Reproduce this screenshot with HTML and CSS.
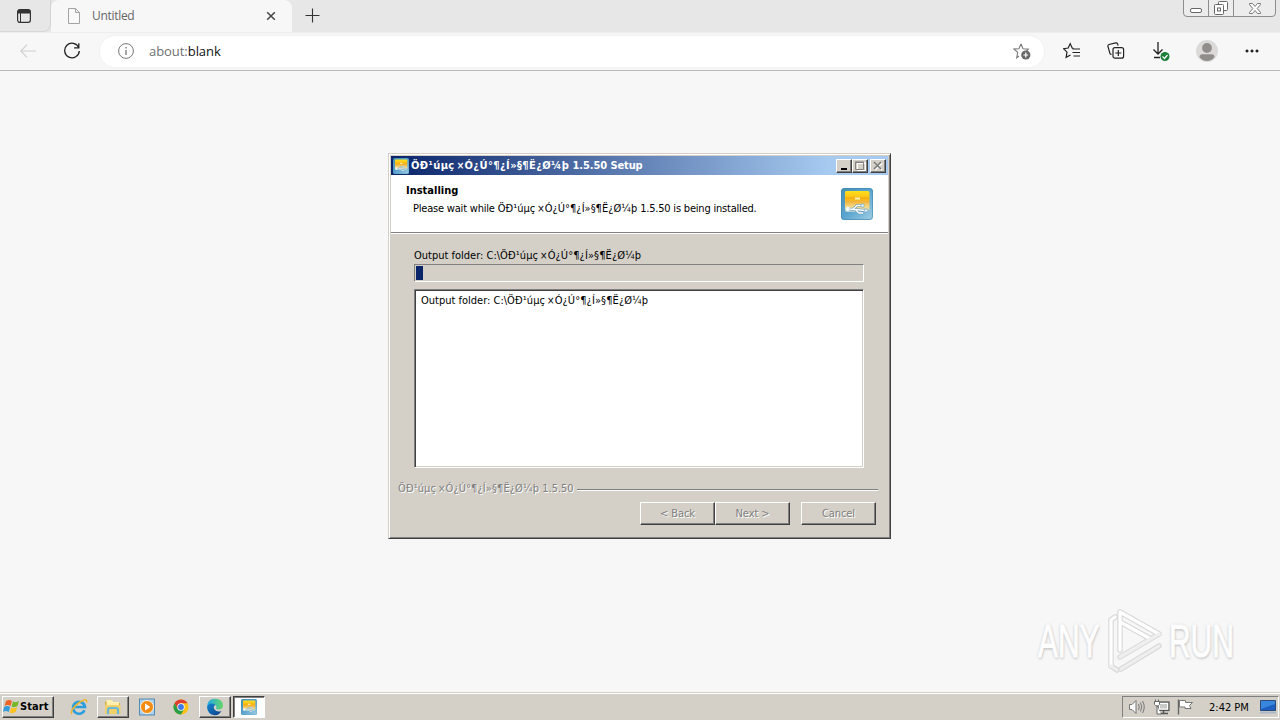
FILE: index.html
```html
<!DOCTYPE html>
<html lang="en">
<head>
<meta charset="utf-8">
<title>Untitled</title>
<link rel="stylesheet" href="styles.css">
</head>
<body>
<svg class="defs" aria-hidden="true">
  <defs>
    <linearGradient id="appBlue" x1="0" y1="0" x2="1" y2="1"><stop offset="0" stop-color="#4590b4"/><stop offset=".5" stop-color="#5ba4d0"/><stop offset="1" stop-color="#a0cfe4"/></linearGradient>
    <linearGradient id="appGold" x1="0" y1="0" x2="0" y2="1"><stop offset="0" stop-color="#ffe01c"/><stop offset=".4" stop-color="#fdb913"/><stop offset=".5" stop-color="#f0b43c"/><stop offset=".75" stop-color="#f5d984"/><stop offset="1" stop-color="#a8cfe0"/></linearGradient>
    <linearGradient id="edgeBlue" x1="0" y1="0" x2="1" y2="1"><stop offset="0" stop-color="#1685d2"/><stop offset="1" stop-color="#0c3f83"/></linearGradient>
    <linearGradient id="edgeGreen" x1="0" y1="0" x2="1" y2="0"><stop offset="0" stop-color="#24a9e6"/><stop offset="1" stop-color="#65d669"/></linearGradient>
    <symbol id="app" viewBox="0 0 32 32">
      <rect width="32" height="32" rx="3.5" fill="url(#appBlue)"/>
      <rect x=".5" y=".5" width="31" height="31" rx="3" fill="none" stroke="#3f86a8" stroke-opacity=".6"/>
      <path d="M5 3h22q1.500 0 1.500 1.500V22q0 2-2 2H6q-2 0-2-2V4.500Q4 3 5 3z" fill="url(#appGold)"/>
      <path d="M4 10h24" stroke="#e8a415"/><path d="M14 10.500h5" stroke="#fff3b8" stroke-width="2"/>
      <circle cx="7" cy="21" r="2.300" fill="#eef8ff"/>
      <path d="M8 21l17 1.500M12 21l4-3.500h4M14 21.500l4 3.500h4" fill="none" stroke="#5a93b4" stroke-width="2.400"/>
      <path d="M8 21l17 1.500M12 21l4-3.500h4M14 21.500l4 3.500h4" fill="none" stroke="#fff" stroke-width="1.300"/>
      <path d="M24 20.500l4 2.500-5 1.500zM20 16h3v3h-3z" fill="#e6f5ff" stroke="#5a93b4" stroke-width=".5"/>
    </symbol>
  </defs>
</svg>

<div class="screen">
  <header class="tabstrip">
    <div class="tab-actions">
      <svg width="16" height="16" viewBox="0 0 16 16"><rect x="1.600" y="1.600" width="12.800" height="12.800" rx="2.300" fill="none" stroke="#333" stroke-width="1.200"/><path d="M1.500 5.500V4q0-2.500 2.500-2.500h8q2.500 0 2.500 2.500v1.500z" fill="#333"/><path d="M4.500 5v9.500" stroke="#333"/></svg>
    </div>
    <div class="tab">
      <svg width="14" height="16" viewBox="0 0 14 16"><path d="M1.500.500h7l4 4v11h-11zM8.500.500v4h4" fill="#f9f9f9" stroke="#a3a3a3"/></svg>
      <span class="tab-title">Untitled</span>
      <svg class="tab-close" width="10" height="10" viewBox="0 0 10 10"><path d="M1.200 1.200l7.600 7.600M8.800 1.200L1.200 8.800" stroke="#444" stroke-width="1.500"/></svg>
    </div>
    <svg class="new-tab" width="15" height="15" viewBox="0 0 15 15"><path d="M7.500.500v14M.500 7.500h14" stroke="#333" stroke-width="1.100"/></svg>
    <div class="caption-buttons">
      <span class="cap"><svg width="12" height="5" viewBox="0 0 12 5"><rect x=".500" y=".500" width="11" height="4" rx="1.500" fill="#fff" stroke="#666"/></svg></span>
      <span class="cap"><svg width="14" height="14" viewBox="0 0 14 14"><path d="M4.500 4V1.500q0-1 1-1h7q1 0 1 1v7q0 1-1 1H10" fill="#fff" stroke="#666"/><rect x=".500" y="3.500" width="9" height="10" rx="1" fill="#fff" stroke="#666"/><rect x="3.500" y="7" width="3" height="3" fill="none" stroke="#666"/></svg></span>
      <span class="cap wide"><svg width="12" height="11" viewBox="0 0 12 11"><path d="M.500.500h3L6 3.500 8.500.500h3v1L8.200 5.500l3.300 4v1h-3L6 7.500 3.500 10.500h-3v-1l3.300-4-3.300-4z" fill="#fff" stroke="#6b6b6b" stroke-width=".9"/></svg></span>
    </div>
  </header>

  <nav class="toolbar">
    <svg class="back" width="16" height="14" viewBox="0 0 16 14"><path d="M7 .700L.800 7 7 13.300M1 7h15" fill="none" stroke="#cfcfcf" stroke-width="1.100"/></svg>
    <svg class="reload" width="18" height="18" viewBox="0 0 18 18"><path d="M15.700 5.600A7.300 7.300 0 1 0 16.300 9" fill="none" stroke="#222" stroke-width="1.300"/><path d="M15.800 1.200v4.700h-4.700" fill="none" stroke="#222" stroke-width="1.300"/></svg>
    <div class="address">
      <svg width="16" height="16" viewBox="0 0 16 16"><circle cx="8" cy="8" r="7.400" fill="none" stroke="#777"/><path d="M8 7v5M8 4v1.500" stroke="#777" stroke-width="1.300"/></svg>
      <span class="url"><span class="scheme">about:</span>blank</span>
      <svg class="fav" width="18" height="17" viewBox="0 0 18 17"><path d="M8 1l2 4.700 5.400.400-2 2.300M6 13l-2.300 1.700 1-5.400L.900 6.100l5-.400L8 1" fill="none" stroke="#777" stroke-width="1.100"/><circle cx="12.800" cy="12" r="4.600" fill="#666"/><path d="M12.800 9.600v4.800M10.400 12h4.800" stroke="#fff" stroke-width="1.200"/></svg>
    </div>
    <div class="tools">
      <svg width="18" height="18" viewBox="0 0 18 18"><path d="M10.500 6.500L9.200 6 7.200 1.600 5.200 6l-4.700.700L4 10.200l-.900 5.200L7.500 13M9.500 7h7.500M9.500 10.500h7.500M10.500 14h6.500" fill="none" stroke="#222" stroke-width="1.200"/></svg>
      <svg width="18" height="18" viewBox="0 0 18 18"><path d="M4.500 12.500q-1.200-.2-1.600-1.300L1 4.600q-.4-1.600 1-2.100L8.700.9q1.300-.3 1.800.8l.6 2" fill="none" stroke="#222" stroke-width="1.200"/><rect x="6" y="5.600" width="10.600" height="10.600" rx="2" fill="#f7f7f7" stroke="#222" stroke-width="1.200"/><path d="M11.300 8v6M8.300 11h6" stroke="#222" stroke-width="1.200"/></svg>
      <svg width="18" height="20" viewBox="0 0 18 20"><path d="M6 1v12M1.500 8.500L6 13l4.500-4.500M2 16.500h6" fill="none" stroke="#222" stroke-width="1.300"/><circle cx="13" cy="15.500" r="4.500" fill="#1a7f37"/><path d="M10.500 15.500l2 2 3-3.500" fill="none" stroke="#fff" stroke-width="1.200"/></svg>
      <svg width="22" height="22" viewBox="0 0 22 22"><circle cx="11" cy="11" r="11" fill="#dcdad8"/><circle cx="11" cy="8" r="4.900" fill="#918d8a"/><path d="M3.500 17q0-2.700 3-2.700h9q3 0 3 2.700-2.700 4-7.500 4t-7.500-4" fill="#918d8a"/></svg>
      <svg width="14" height="4" viewBox="0 0 14 4"><path d="M2 .500a1.500 1.500 0 1 0 .01 0M7 .500a1.500 1.500 0 1 0 .01 0M12 .500a1.500 1.500 0 1 0 .01 0" fill="#222"/></svg>
    </div>
  </nav>

  <main class="page">
    <div class="watermark">
      <span class="wm-text">ANY</span>
      <svg width="60" height="66" viewBox="0 0 60 66"><g fill="none" stroke-linejoin="round" stroke-linecap="round"><path d="M5 12v46M5 12l4-3M5 58l6 4M14 4v38M14 4l39 22L14 49M15 61l38-23M16 15l27 15" stroke="#d9d9d9" stroke-width="5.500"/><path d="M5 12v46M5 12l4-3M14 4v38M14 4l39 22M16 15l27 15" stroke="#fff" stroke-width="3.200"/><path d="M5 58l6 4M53 26L14 49M15 61l38-23" stroke="#efefef" stroke-width="3.200"/></g></svg>
      <span class="wm-text run">RUN</span>
    </div>
  </main>

  <footer class="taskbar">
    <div class="start">
      <svg width="17" height="16" viewBox="0 0 17 16"><path d="M3 2q3-2 6 0L7.500 7q-3-2-6 0z" fill="#ee6427"/><path d="M10 2.500q3 1.500 6-.500L14.500 7q-3 2-6 .500z" fill="#76b82a"/><path d="M1.200 8q3-2 6 0l-1.500 5q-3-2-5.700 0z" fill="#329bd8"/><path d="M8.200 8.500q3 1.500 6-.500l-1.500 5q-3 2-6 .500z" fill="#fbc221"/></svg>
      <span>Start</span>
    </div>
    <div class="task ie"><svg width="18" height="18" viewBox="0 0 18 18"><path d="M14.500 12.300A6 6 0 1 1 15 9H5" fill="none" stroke="#2a9ddd" stroke-width="2.600"/><path d="M2 16C-1 13 8 4 14 2q3.500-.800 2.500 2.500" fill="none" stroke="#eeb62e" stroke-width="1.500"/></svg></div>
    <div class="task raised"><svg width="18" height="18" viewBox="0 0 18 18"><path d="M1 3.500h6l1.500 1.500H16v11H1z" fill="#d9ae3e"/><path d="M2.500 2h5l2 2H15v4H2.500z" fill="#fff0ad"/><path d="M1 7h15.500v9H1z" fill="#f0d068"/><path d="M4 16v-4q0-2 2-2h6q2 0 2 2v4" fill="none" stroke="#69b8dc" stroke-width="2.200"/></svg></div>
    <div class="task wmp"><svg width="18" height="18" viewBox="0 0 18 18"><rect x="1.500" y="1" width="15" height="16" fill="#a8d0ec" stroke="#5389b5"/><circle cx="9" cy="9" r="6.500" fill="#f38a12" stroke="#fff4dc"/><path d="M7 5.500v7L12.500 9z" fill="#fff"/></svg></div>
    <div class="task chrome"><svg width="16" height="16" viewBox="0 0 16 16"><circle cx="8" cy="8" r="7.500" fill="#fbc116"/><path d="M1.500 4.250A7.500 7.500 0 0 1 14.500 4.250H8L4.750 9.870z" fill="#df3f31"/><path d="M1.500 4.250A7.500 7.500 0 0 0 8 15.500l3.250-5.630H4.750z" fill="#2a9d48"/><circle cx="8" cy="8" r="3.700" fill="#fff"/><circle cx="8" cy="8" r="2.900" fill="#3d7ae8"/></svg></div>
    <div class="task raised"><svg width="18" height="18" viewBox="0 0 18 18"><path d="M1 9q0-8 8-8.200Q16.800 1 17 7.500q0 4-4.500 4-2 0-2.500-1 1.500-3-2-4.200Q3 5 1 9" fill="url(#edgeGreen)"/><path d="M1 9q1-3.700 5-3.500 2.500.200 3.500 1.500-3 1.500-1 4.500 2.500 3 7 1.500-2.500 4.500-7 4.200Q1.500 16.500 1 9" fill="url(#edgeBlue)"/></svg></div>
    <div class="task pressed"><svg width="16" height="16"><use href="#app" width="16" height="16"/></svg></div>
    <div class="tray">
      <svg width="18" height="16" viewBox="0 0 18 16"><path d="M1.500 5.500h2.500l4-4v13l-4-4H1.500z" fill="#fafafa" stroke="#777"/><path d="M10.500 5q1.500 3 0 6M12.500 3.500q2.500 4.500 0 9M14.500 2q3.500 6 0 12" fill="none" stroke="#777"/></svg>
      <svg width="17" height="16" viewBox="0 0 17 16"><rect x="5" y="3" width="11" height="8.500" fill="#c9c9c6" stroke="#555" stroke-width="1.200"/><rect x="6.500" y="4.500" width="8" height="5.500" fill="none" stroke="#fff"/><path d="M7 14.500h8M10.500 11.500v3" stroke="#555" stroke-width="1.500"/><path d="M1.500 2.500h5v3q-1 1.500-2.500 1.500T1.500 5.500zM2.500.500v2M5.500.500v2M4 7v8h4" fill="#fff" stroke="#666"/></svg>
      <svg width="17" height="16" viewBox="0 0 17 16"><path d="M1.500.500v15" stroke="#666" stroke-width="1.400"/><path d="M2.500 1.500h6v2h7l-3 3 1.500 3h-6v-1.500H2.500z" fill="#fff" stroke="#777"/></svg>
      <time class="clock">2:42 PM</time>
      <svg width="16" height="14" viewBox="0 0 16 14"><path d="M.500.500h15v10H.500z" fill="#1c5fc0" stroke="#294b7b"/><path d="M1 1h14v3L1 9z" fill="#3986de"/><path d="M0 12.500h16" stroke="#aab8c9" stroke-width="2"/></svg>
    </div>
  </footer>
</div>

<section class="dialog" role="dialog">
  <div class="titlebar">
    <svg width="16" height="16"><use href="#app" width="16" height="16"/></svg>
    <span class="title"><span class="name">ÖÐ¹úµç<span class="times">×</span>Ó¿Ú°¶¿Í»§¶Ë¿Ø¼þ</span> 1.5.50 Setup</span>
    <div class="win-buttons">
      <span class="wb"><svg width="12" height="10" viewBox="0 0 12 10"><path d="M3 8h6" stroke="#000" stroke-width="2"/></svg></span>
      <span class="wb"><svg width="12" height="10" viewBox="0 0 12 10"><path d="M2.500 1.500h8v7h-8zM2 1h9" fill="none" stroke="#fff" transform="translate(1 1)"/><path d="M1.500 1.500h8v7h-8zM1 1h9" fill="none" stroke="#808080"/></svg></span>
      <span class="wb last"><svg width="12" height="10" viewBox="0 0 12 10"><path d="M3 2l7 7M10 2L3 9" stroke="#fff" stroke-width="1.500"/><path d="M2 1l7 7M9 1L2 8" stroke="#777" stroke-width="1.500"/></svg></span>
    </div>
  </div>
  <div class="banner">
    <div class="banner-text">
      <h1>Installing</h1>
      <p>Please wait while <span class="name">ÖÐ¹úµç<span class="times">×</span>Ó¿Ú°¶¿Í»§¶Ë¿Ø¼þ</span> 1.5.50 is being installed.</p>
    </div>
    <svg width="32" height="32"><use href="#app" width="32" height="32"/></svg>
  </div>
  <div class="content">
    <p class="status">Output folder: C:\<span class="name">ÖÐ¹úµç<span class="times">×</span>Ó¿Ú°¶¿Í»§¶Ë¿Ø¼þ</span></p>
    <div class="progress"><div class="chunk"></div></div>
    <div class="log">Output folder: C:\<span class="name">ÖÐ¹úµç<span class="times">×</span>Ó¿Ú°¶¿Í»§¶Ë¿Ø¼þ</span></div>
  </div>
  <div class="brand"><span><span class="name">ÖÐ¹úµç<span class="times">×</span>Ó¿Ú°¶¿Í»§¶Ë¿Ø¼þ</span> 1.5.50</span><i></i></div>
  <div class="buttons">
    <button>&lt; Back</button><button>Next &gt;</button><button class="cancel">Cancel</button>
  </div>
</section>
</body>
</html>
```
FILE: styles.css
```css
* { box-sizing: border-box; }
body { margin: 0; overflow: hidden; font-family: "DejaVu Sans Condensed", "DejaVu Sans", sans-serif; font-size: 11px; color: #000; }
svg { display: block; flex: none; }
p, h1 { margin: 0; white-space: nowrap; }
.defs { position: absolute; width: 0; height: 0; }
.screen { width: 1280px; height: 720px; display: flex; flex-direction: column; background: #f7f7f7; }

.tabstrip { height: 32px; display: flex; align-items: flex-start; background: #e7e7e7; }
.tab-actions { width: 51px; height: 32px; padding: 8px 0 0 16px; border-bottom: 1px solid #d8d8d8; border-right: 1px solid #d3d3d3; border-bottom-right-radius: 8px; }
.tab { width: 241px; height: 32px; display: flex; align-items: center; padding: 0 16px 0 16px; background: #f7f7f7; border-radius: 8px 8px 0 0; }
.tab-title { margin: -2px 0 0 11px; font: 12px "Open Sans", sans-serif; letter-spacing: -.3px; color: #666; }
.tab-close { margin-left: auto; }
.new-tab { margin: 8px 0 0 13px; }
.caption-buttons { margin: -1px 4px 0 auto; height: 18px; display: flex; border: 1px solid #8d8d8d; border-radius: 0 0 4px 4px; background: #ececec; }
.cap { width: 25px; display: flex; align-items: center; justify-content: center; border-right: 1px solid #8d8d8d; }
.cap:first-child { padding-top: 4px; }
.cap.wide { width: 41px; border-right: 0; }

.toolbar { height: 39px; display: flex; align-items: center; padding-bottom: 1px; border-bottom: 1px solid #b9b9b9; border-top: 1px solid #eee; background: #f7f7f7; }
.back { margin-left: 20px; }
.reload { margin-left: 27px; }
.address { width: 944px; height: 31px; margin-left: 19px; padding: 0 13px 0 18px; display: flex; align-items: center; border-radius: 16px; background: #fff; box-shadow: 0 0 1px 1px #f2f2f2; }
.url { margin: -1px 0 0 15px; font: 13px "Open Sans", sans-serif; letter-spacing: -.05px; color: #111; }
.scheme { color: #707070; }
.fav { margin-left: auto; }
.tools { flex: 1; display: flex; align-items: center; justify-content: space-between; padding: 0 21px 0 19px; }
.tools svg:nth-child(3) { margin-left: 2px; }
.tools svg:nth-child(4) { margin-right: 2px; }

.page { flex: 1; position: relative; }
.watermark { position: absolute; left: 1038px; top: 537px; display: flex; align-items: center; }
.wm-text { width: 64px; font: 46px/60px "Liberation Sans", sans-serif; color: #fdfdfd; -webkit-text-stroke: 1.2px #fdfdfd; text-shadow: 0 0 3px #bbb, 1px 2px 3px #ccc; transform: scaleX(.65); transform-origin: 0 50%; }
.watermark svg { margin-left: 4px; }
.wm-text.run { margin-left: 3px; }

.taskbar { height: 28px; display: flex; align-items: center; padding: 2px 1px 1px 2px; background: #d4d0c8; border-top: 1px solid #d4d0c8; box-shadow: inset 0 1px #fff; }
.start, .task.raised, .wb, button { border: 1px solid; border-color: #fff #404040 #404040 #fff; box-shadow: inset -1px -1px #808080; background: #d4d0c8; }
.start { width: 52px; height: 22px; display: flex; align-items: center; padding-bottom: 1px; font-weight: bold; letter-spacing: .1px; }
.task { width: 32px; height: 22px; display: flex; align-items: center; justify-content: center; }
.ie { margin-left: 9px; }
.task.raised { margin-left: 2px; }
.wmp, .chrome { margin-left: 2px; }
.task.pressed { margin-left: 2px; background: #fff; border: 1px solid; border-color: #404040 #fff #fff #404040; box-shadow: inset 1px 1px #808080; }
.tray { width: 157px; height: 22px; margin-left: auto; display: flex; align-items: center; padding: 0 2px 0 5px; border: 1px solid; border-color: #808080 #fff #fff #808080; }
.tray svg { margin-right: 7px; }
.tray svg:last-child { margin: 0 0 0 auto; }
.clock { margin-left: 8px; }

.dialog { position: absolute; left: 388px; top: 153px; width: 503px; height: 386px; padding: 2px; background: #d4d0c8; border: 1px solid; border-color: #d4d0c8 #404040 #404040 #d4d0c8; box-shadow: inset 1px 1px #fff, inset -1px -1px #808080; }
.name { letter-spacing: .09px; }
.times { display: inline-block; padding-left: 2px; font-size: .9em; }
.titlebar { height: 19px; display: flex; align-items: center; padding: 0 2px; background: linear-gradient(90deg, #0a246a, #a6caf0 88%); }
.title { margin-left: 2px; color: #fff; font-weight: bold; white-space: nowrap; letter-spacing: -.1px; }
.title .name { letter-spacing: .4px; }
.win-buttons { margin-left: auto; display: flex; }
.wb { width: 16px; height: 14px; padding: 1px; }
.wb.last { margin-left: 2px; }
.banner { height: 58px; display: flex; justify-content: space-between; padding: 13px 15px 0 15px; background: #fff; border-bottom: 1px solid #808080; }
.banner-text { margin-top: -5px; line-height: 14px; }
.banner h1 { font-size: 11px; font-weight: bold; line-height: 16px; }
.banner p { margin: 3px 0 0 7px; letter-spacing: -.2px; }
.banner .name { letter-spacing: .02px; }
.content { height: 237px; border-top: 1px solid #fff; padding: 15px 24px 0 23px; }
.status { height: 15px; line-height: 14px; }
.progress { width: 450px; height: 18px; border: 1px solid; border-color: #808080 #fff #fff #808080; padding: 1px; }
.chunk { width: 7px; height: 14px; background: #0a246a; }
.log { width: 450px; height: 179px; margin-top: 7px; padding: 4px 6px; line-height: 14px; background: #fff; border: 1px solid; border-color: #808080 #fff #fff #808080; box-shadow: inset 1px 1px #404040, inset -1px -1px #d4d0c8; }
.brand { display: flex; align-items: center; height: 32px; padding: 5px 10px 0 7px; color: #808080; text-shadow: 1px 1px #fff; line-height: 14px; white-space: nowrap; }
.brand i { flex: 1; height: 2px; margin: 2px 0 0 3px; background: #808080; border-bottom: 1px solid #fff; }
.buttons { display: flex; justify-content: flex-end; padding-right: 12px; }
button { width: 75px; height: 23px; padding: 0; font: inherit; letter-spacing: -.1px; color: #808080; text-shadow: 1px 1px #fff; }
.cancel { margin-left: 11px; }
```
